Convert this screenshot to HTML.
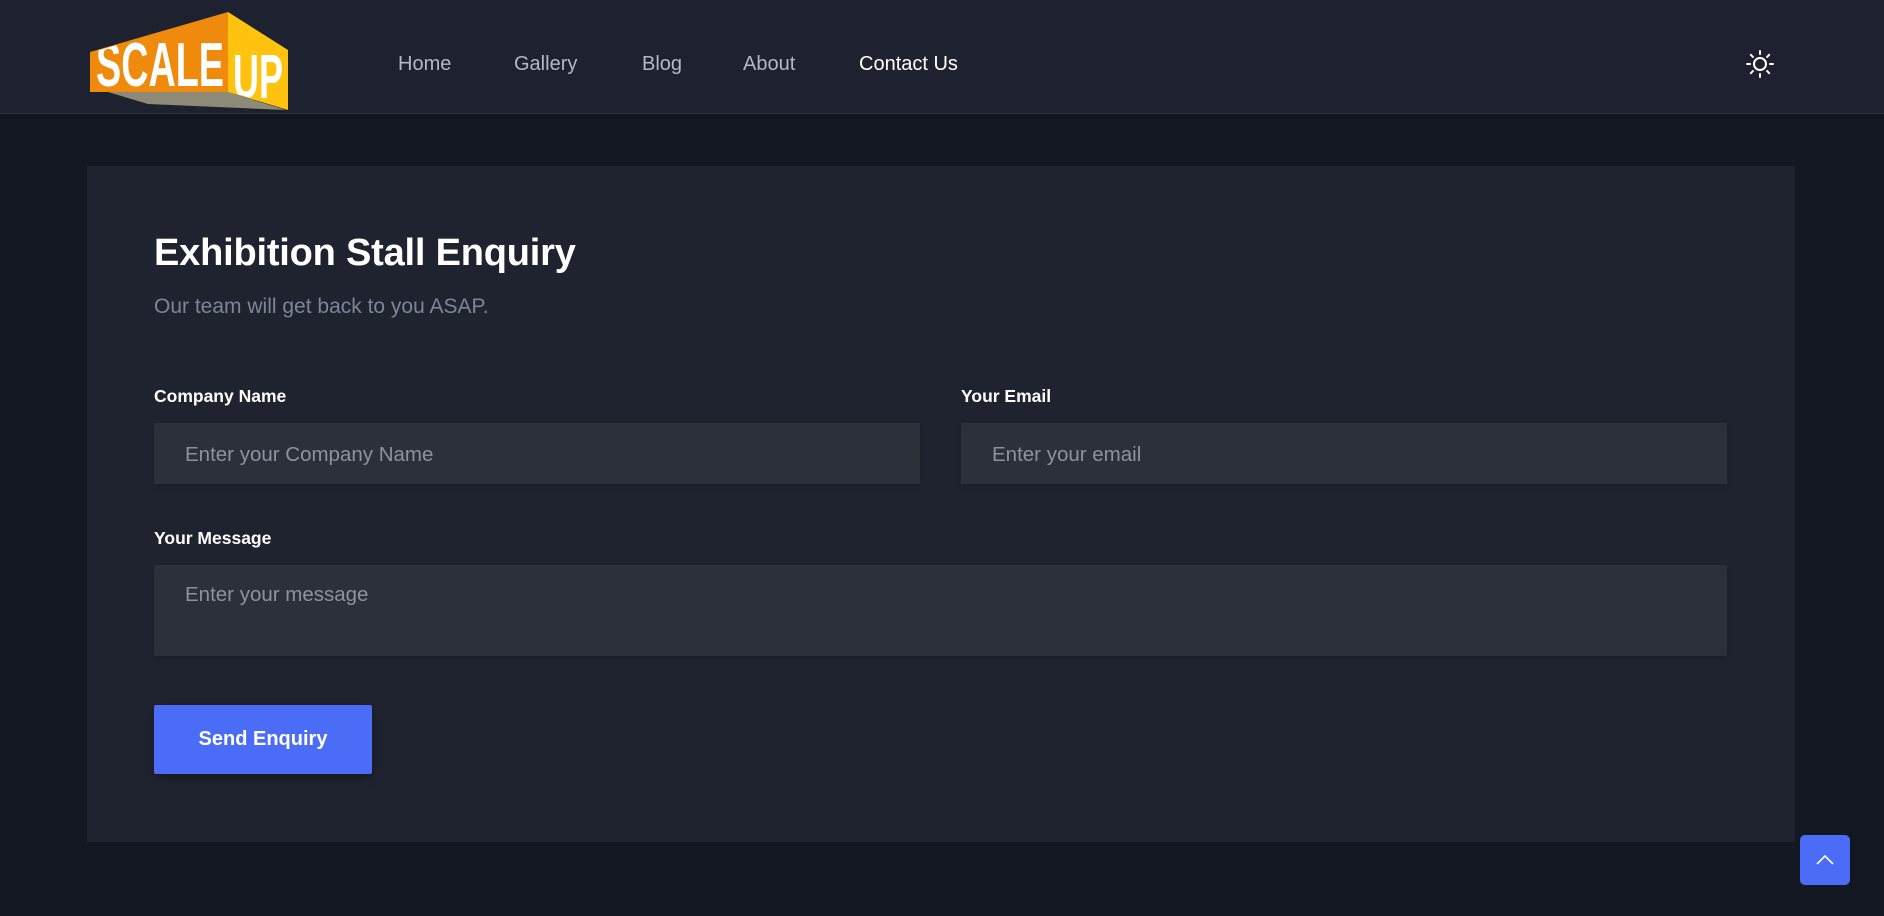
<!DOCTYPE html>
<html><head><meta charset="utf-8"><style>
*{margin:0;padding:0;box-sizing:border-box}
body{width:1884px;height:916px;background:#131722;font-family:"Liberation Sans",sans-serif;position:relative;overflow:hidden}
header{position:absolute;left:0;top:0;width:1884px;height:114px;background:#1e2230;border-bottom:1px solid #2f3441}
.nav a{position:absolute;top:52px;font-size:20px;color:#b3b8c3;text-decoration:none;line-height:24px}
.card{position:absolute;left:87px;top:166px;width:1708px;height:676px;background:#1f2330}
h1{position:absolute;left:154px;top:232px;font-size:38px;color:#fff;font-weight:bold;letter-spacing:-0.2px}
.sub{position:absolute;left:154px;top:295px;font-size:21px;color:#7d8597}
label{position:absolute;font-size:17.5px;font-weight:bold;color:#fff}
.in{position:absolute;background:#2c303b;color:#8c929f;font-size:20.5px;padding-left:31px;box-shadow:0 2px 4px rgba(0,0,0,.15)}
.btn{position:absolute;left:154px;top:705px;width:218px;height:69px;background:#4a6cf7;color:#fff;font-size:20px;font-weight:bold;text-align:center;line-height:69px;border-radius:2px;box-shadow:0 4px 10px rgba(0,0,0,.3)}
.top{position:absolute;left:1800px;top:835px;width:50px;height:50px;background:#4a6cf7;border-radius:5px}
</style></head><body>
<header>
<svg style="position:absolute;left:88px;top:12px" width="204" height="100" viewBox="0 0 204 100">
<defs>
<clipPath id="co"><polygon points="4,40 140,2 140,80 4,80"/></clipPath>
<clipPath id="cy"><polygon points="142,4 198,40 198,96 142,80"/></clipPath>
</defs>
<polygon points="20,80 140,80 198,98 60,92" fill="#8d8a78"/>
<polygon points="2,40 140,0 140,80 2,80" fill="#f08a0c"/>
<polygon points="140,0 200,38 200,98 140,80" fill="#ffc20e"/>
<g clip-path="url(#co)"><text x="8" y="74" font-family="Liberation Sans" font-weight="bold" font-size="62" fill="#fff" textLength="128" lengthAdjust="spacingAndGlyphs">SCALE</text></g>
<g clip-path="url(#cy)"><text x="145" y="86" font-family="Liberation Sans" font-weight="bold" font-size="62" fill="#fff" textLength="50" lengthAdjust="spacingAndGlyphs">UP</text></g>
</svg>
<div class="nav">
<a style="left:398px">Home</a><a style="left:514px">Gallery</a><a style="left:642px">Blog</a><a style="left:743px">About</a><a style="left:859px;color:#fff">Contact Us</a>
</div>
<svg style="position:absolute;left:1746px;top:50px" width="28" height="28" viewBox="0 0 28 28" stroke="#fff" stroke-width="2" fill="none" stroke-linecap="round">
<circle cx="14" cy="14" r="6"/><path d="M14 1v3M14 24v3M1 14h3M24 14h3M4.8 4.8l2.1 2.1M21.1 21.1l2.1 2.1M4.8 23.2l2.1-2.1M21.1 6.9l2.1-2.1"/>
</svg>
</header>
<div class="card"></div>
<h1>Exhibition Stall Enquiry</h1>
<div class="sub">Our team will get back to you ASAP.</div>
<label style="left:154px;top:386px">Company Name</label>
<label style="left:961px;top:386px">Your Email</label>
<div class="in" style="left:154px;top:423px;width:766px;height:61px;line-height:63px">Enter your Company Name</div>
<div class="in" style="left:961px;top:423px;width:766px;height:61px;line-height:63px">Enter your email</div>
<label style="left:154px;top:528px">Your Message</label>
<div class="in" style="left:154px;top:565px;width:1573px;height:91px;padding-top:18px">Enter your message</div>
<div class="btn">Send Enquiry</div>
<div class="top"><svg width="50" height="50" viewBox="0 0 50 50"><path d="M17 29l8-8 8 8" stroke="#fff" stroke-width="1.6" fill="none"/></svg></div>
</body></html>
